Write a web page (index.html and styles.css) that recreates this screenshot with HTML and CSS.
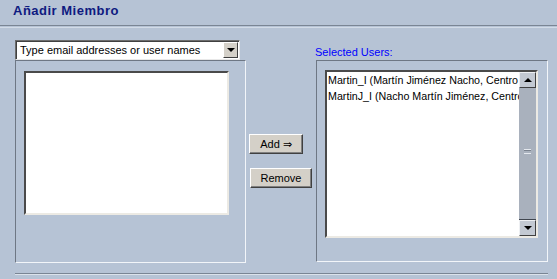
FILE: index.html
```html
<!DOCTYPE html>
<html lang="es">
<head>
    <meta charset="UTF-8">
    <title>Añadir Miembro</title>
    <link rel="stylesheet" href="styles.css">
</head>
<body>
    <div class="header">Añadir Miembro</div>
    <div class="header-rule"></div>

    <div class="main">
        <div class="col-left">
            <div class="select">
                <span class="select-text">Type email addresses or user names</span>
                <span class="select-btn"><span class="tri-down"></span></span>
            </div>
            <div class="panel panel-left">
                <div class="textarea"></div>
            </div>
        </div>

        <div class="col-mid">
            <button class="btn btn-add">Add &rArr;</button>
            <button class="btn btn-remove">Remove</button>
        </div>

        <div class="col-right">
            <div class="label">Selected Users:</div>
            <div class="panel panel-right">
                <div class="listbox">
                    <div class="list-items">
                        <div class="item">Martin_I (Martín Jiménez Nacho, Centro</div>
                        <div class="item">MartinJ_I (Nacho Martín Jiménez, Centro</div>
                    </div>
                    <div class="scrollbar">
                        <span class="sb-btn"><span class="tri-up"></span></span>
                        <span class="sb-thumb"><span class="grip"></span></span>
                        <span class="sb-btn"><span class="tri-down"></span></span>
                    </div>
                </div>
            </div>
        </div>
    </div>

    <div class="footer-rule"></div>
</body>
</html>
```

FILE: styles.css
```css
body { margin: 0; background: #b6c3d5; font-family: "Liberation Sans", Arial, sans-serif; font-size: 11px; color: #000; overflow: hidden; }

.header { height: 25px; padding-left: 13px; line-height: 22px; font-size: 13px; font-weight: bold; letter-spacing: 0.5px; color: #0e1a80; border-bottom: 1px solid #7a8594; }
.header-rule { height: 1px; margin-top: 1px; background: #d2dbe7; }

.main { display: flex; padding: 12px 0 0 15px; }

.col-left { width: 231px; }
.select { display: flex; width: 225px; height: 20px; box-sizing: border-box; background: #fff; border: 1px solid; border-color: #6c6c6c #e8e8e8 #e8e8e8 #6c6c6c; box-shadow: inset 1px 1px 0 #404040; }
.select-text { flex: 1; padding: 3px 0 0 4px; }
.select-btn { width: 15px; margin: 1px 1px 1px 0; box-sizing: border-box; background: #d4d0c8; border: 1px solid; border-color: #fff #404040 #404040 #fff; display: flex; align-items: center; justify-content: center; }

.tri-down { width: 0; height: 0; border-left: 4px solid transparent; border-right: 4px solid transparent; border-top: 4px solid #000; }
.tri-up { width: 0; height: 0; border-left: 4px solid transparent; border-right: 4px solid transparent; border-bottom: 4px solid #000; }

.panel { box-sizing: border-box; border: 1px solid; border-color: #6e7784 #f2f5f9 #f2f5f9 #6e7784; }
.panel-left { width: 231px; height: 203px; padding: 10px 0 0 8px; }
.textarea { width: 205px; height: 144px; box-sizing: border-box; background: #fff; border: 2px solid; border-color: #4a4a4a #eceae4 #eceae4 #4a4a4a; }

.col-mid { width: 70px; padding: 94px 0 0 3px; box-sizing: border-box; display: flex; flex-direction: column; align-items: flex-start; gap: 14px; }
.btn { margin: 0; height: 20px; padding: 0 6px; font-family: inherit; font-size: 11px; color: #000; background: #d4d0c8; border: 1px solid; border-color: #fff #404040 #404040 #fff; box-shadow: inset -1px -1px 0 #808080; border-radius: 0; }
.btn-add { width: 54px; }
.btn-remove { width: 62px; margin-left: 1px; }

.col-right { width: 232px; }
.label { color: #0000ff; height: 15px; line-height: 15px; margin: 5px 0 0 -1px; }
.panel-right { width: 232px; height: 202px; padding: 9px 0 0 8px; }
.listbox { display: flex; width: 213px; height: 168px; box-sizing: border-box; background: #fff; border: 2px solid; border-color: #4a4a4a #eceae4 #eceae4 #4a4a4a; }
.list-items { flex: 1; overflow: hidden; padding: 0 0 0 1px; }
.item { white-space: nowrap; line-height: 16px; font-size: 10.7px; }

.scrollbar { width: 17px; display: flex; flex-direction: column; background: #aeb6c2; }
.sb-btn { height: 16px; box-sizing: border-box; background: #c3c9d2; border: 1px solid; border-color: #eef0f3 #404040 #404040 #eef0f3; display: flex; align-items: center; justify-content: center; }
.sb-thumb { flex: 1; background: #a9b1bd; border-bottom: 1px solid #40464f; display: flex; align-items: center; justify-content: center; padding-bottom: 4px; }
.grip { width: 7px; height: 5px; border-top: 1px solid #e4e8ee; border-bottom: 1px solid #e4e8ee; box-sizing: border-box; box-shadow: inset 0 1px 0 #7b838f; }

.footer-rule { height: 1px; margin: 10px 9px 0 15px; background: #7a8594; border-bottom: 1px solid #dbe2eb; }
```
